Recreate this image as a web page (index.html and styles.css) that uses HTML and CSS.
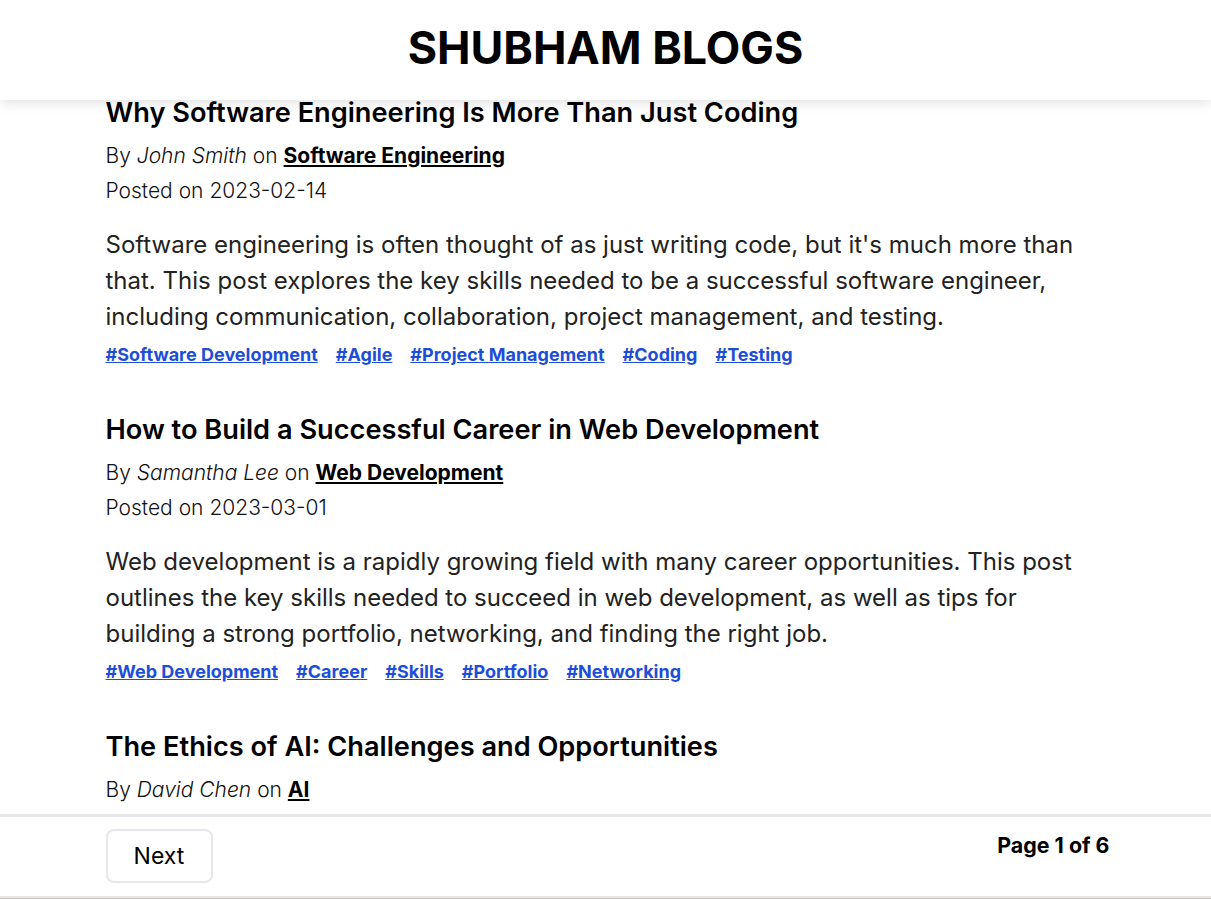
FILE: index.html
```html
<!DOCTYPE html>
<html lang="en">
<head>
<meta charset="utf-8">
<title>Shubham Blogs</title>
<link rel="stylesheet" href="styles.css">
</head>
<body>
<div class="app">
  <header class="site-header">
    <h1 class="brand">SHUBHAM BLOGS</h1>
  </header>
  <main class="feed">
    <div class="container">
      <article class="post">
        <h2 class="post-title">Why Software Engineering Is More Than Just Coding</h2>
        <p class="meta">By <em>John Smith</em> on <a class="category" href="#">Software Engineering</a></p>
        <p class="meta">Posted on 2023-02-14</p>
        <p class="excerpt">Software engineering is often thought of as just writing code, but it's much more than that. This post explores the key skills needed to be a successful software engineer, including communication, collaboration, project management, and testing.</p>
        <div class="tags">
          <a href="#">#Software Development</a>
          <a href="#">#Agile</a>
          <a href="#">#Project Management</a>
          <a href="#">#Coding</a>
          <a href="#">#Testing</a>
        </div>
      </article>
      <article class="post">
        <h2 class="post-title">How to Build a Successful Career in Web Development</h2>
        <p class="meta">By <em>Samantha Lee</em> on <a class="category" href="#">Web Development</a></p>
        <p class="meta">Posted on 2023-03-01</p>
        <p class="excerpt">Web development is a rapidly growing field with many career opportunities. This post outlines the key skills needed to succeed in web development, as well as tips for building a strong portfolio, networking, and finding the right job.</p>
        <div class="tags">
          <a href="#">#Web Development</a>
          <a href="#">#Career</a>
          <a href="#">#Skills</a>
          <a href="#">#Portfolio</a>
          <a href="#">#Networking</a>
        </div>
      </article>
      <article class="post">
        <h2 class="post-title">The Ethics of AI: Challenges and Opportunities</h2>
        <p class="meta">By <em>David Chen</em> on <a class="category" href="#">AI</a></p>
      </article>
    </div>
  </main>
  <footer class="pager">
    <div class="pager-inner">
      <button class="btn" type="button">Next</button>
      <span class="page-info">Page 1 of 6</span>
    </div>
  </footer>
</div>
</body>
</html>
```

FILE: styles.css
```css
* { box-sizing: border-box; }
html, body { margin: 0; padding: 0; }
body {
  font-family: Inter, "Noto Sans", sans-serif;
  color: #111;
  background: #cbc4b8;
}
.app {
  display: flex;
  flex-direction: column;
  background: #fff;
  height: calc(100vh - 1px);
}
.site-header {
  height: 100px;
  flex: none;
  display: flex;
  align-items: center;
  justify-content: center;
  background: #fff;
  position: relative;
  z-index: 2;
  box-shadow: 0 3px 12px rgba(0, 0, 0, 0.12);
}
.brand {
  margin: 0 0 4px;
  font-size: 44.8px;
  font-weight: 700;
  color: #000;
}
.feed {
  flex: 1;
  overflow: hidden;
  position: relative;
  z-index: 1;
}
.container {
  max-width: 1000px;
  margin: 0 auto;
  padding-right: 1px;
}
.post {
  padding-bottom: 50px;
}
.post-title {
  margin: -3px 0 15px;
  font-size: 27.2px;
  line-height: 32px;
  font-weight: 600;
  color: #000;
}
.meta {
  margin: 0 0 11px;
  font-size: 21px;
  line-height: 24px;
  font-weight: 300;
  color: #111;
}
.meta em { font-style: italic; }
.category {
  color: #000;
  font-weight: 700;
  text-decoration: underline;
}
.excerpt {
  margin: 24px 0 8px;
  font-size: 24px;
  line-height: 36px;
  font-weight: 400;
  color: #222;
}
.tags {
  display: flex;
  flex-wrap: wrap;
  gap: 18px;
}
.tags a {
  font-size: 18px;
  line-height: 24px;
  font-weight: 700;
  color: #1d4ed8;
  text-decoration: underline;
}
.pager {
  flex: none;
  height: 84px;
  border-top: 3px solid #e5e7eb;
  border-bottom: 2px solid #e5e7eb;
  background: #fff;
  position: relative;
  z-index: 2;
}
.pager-inner {
  max-width: 1000px;
  margin: 0 auto;
  display: flex;
  justify-content: space-between;
  align-items: flex-start;
  padding-top: 12px;
}
.btn {
  font-family: inherit;
  font-size: 23px;
  font-weight: 400;
  color: #000;
  background: #fff;
  border: 2px solid #e5e7eb;
  border-radius: 8px;
  width: 107px;
  height: 54px;
  cursor: pointer;
}
.page-info {
  font-size: 21.4px;
  font-weight: 700;
  margin-top: 3px;
  margin-right: -4px;
  color: #000;
}
```
